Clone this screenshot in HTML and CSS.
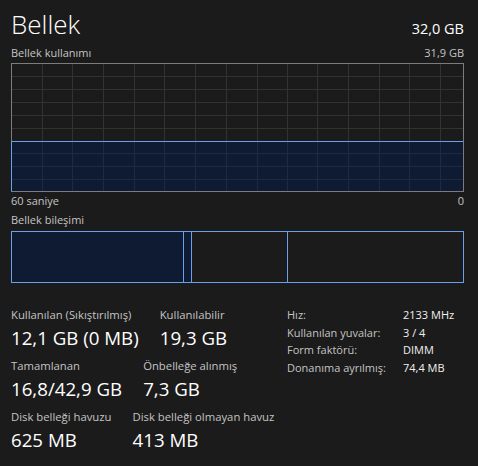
FILE: index.html
```html
<!DOCTYPE html>
<html lang="tr">
<head>
<meta charset="utf-8">
<title>Bellek</title>
<link rel="stylesheet" href="styles.css">
</head>
<body>
<main class="page">
  <header class="header">
    <h1 class="title">Bellek</h1>
    <span class="total">32,0 GB</span>
  </header>

  <div class="graph-head">
    <span>Bellek kullanımı</span>
    <span>31,9 GB</span>
  </div>

  <svg class="graph" width="453" height="129" viewBox="0 0 453 129" aria-hidden="true">
    <rect x="1" y="78" width="451" height="50" fill="#0e1b32"/>
    <path class="grid-top" d="M1 13.5H452M1 26.5H452M1 39.5H452M1 52.5H452M1 65.5H452
      M31.5 1V78M61.5 1V78M92.5 1V78M123.5 1V78M153.5 1V78M184.5 1V78M215.5 1V78M246.5 1V78M276.5 1V78M306.5 1V78M337.5 1V78M368.5 1V78M398.5 1V78M429.5 1V78"/>
    <path class="grid-fill" d="M1 90.5H452M1 103.5H452M1 116.5H452
      M31.5 79V128M61.5 79V128M92.5 79V128M123.5 79V128M153.5 79V128M184.5 79V128M215.5 79V128M246.5 79V128M276.5 79V128M306.5 79V128M337.5 79V128M368.5 79V128M398.5 79V128M429.5 79V128"/>
    <rect class="frame" x="0.5" y="0.5" width="452" height="128"/>
    <path class="usage" d="M0.5 128V78.5H452"/>
  </svg>

  <div class="axis">
    <span>60 saniye</span>
    <span>0</span>
  </div>

  <div class="comp-label">Bellek bileşimi</div>
  <div class="comp">
    <div class="seg seg-used" style="width:172px"></div>
    <div class="seg seg-used" style="width:8px"></div>
    <div class="seg" style="width:96px"></div>
    <div class="seg seg-last"></div>
  </div>

  <section class="stats">
    <div class="stats-main">
      <div class="stat-row">
        <div class="stat">
          <div class="stat-label">Kullanılan (Sıkıştırılmış)</div>
          <div class="stat-value">12,1 GB (0 MB)</div>
        </div>
        <div class="stat">
          <div class="stat-label">Kullanılabilir</div>
          <div class="stat-value">19,3 GB</div>
        </div>
      </div>
      <div class="stat-row">
        <div class="stat">
          <div class="stat-label">Tamamlanan</div>
          <div class="stat-value">16,8/42,9 GB</div>
        </div>
        <div class="stat">
          <div class="stat-label">Önbelleğe alınmış</div>
          <div class="stat-value">7,3 GB</div>
        </div>
      </div>
      <div class="stat-row">
        <div class="stat">
          <div class="stat-label">Disk belleği havuzu</div>
          <div class="stat-value">625 MB</div>
        </div>
        <div class="stat">
          <div class="stat-label">Disk belleği olmayan havuz</div>
          <div class="stat-value">413 MB</div>
        </div>
      </div>
    </div>

    <dl class="specs">
      <dt>Hız:</dt><dd>2133 MHz</dd>
      <dt>Kullanılan yuvalar:</dt><dd>3 / 4</dd>
      <dt>Form faktörü:</dt><dd>DIMM</dd>
      <dt>Donanıma ayrılmış:</dt><dd>74,4 MB</dd>
    </dl>
  </section>
</main>
</body>
</html>
```

FILE: styles.css
```css
html, body {
  margin: 0;
  background: #1b1b1b;
}

body {
  font-family: "Open Sans", "Noto Sans", sans-serif;
  color: #c4c4c4;
  font-size: 11px;
}

.page {
  padding: 8px 14px 0 11px;
}

.header {
  display: flex;
  justify-content: space-between;
  align-items: baseline;
  height: 32px;
  line-height: 32px;
}

.title {
  margin: 0;
  font-size: 26px;
  font-weight: 300;
  color: #ffffff;
  line-height: 32px;
}

.total {
  font-size: 14.5px;
  color: #ffffff;
}

.graph-head,
.axis {
  display: flex;
  justify-content: space-between;
  line-height: 15px;
}

.graph-head {
  margin-top: 5px;
}

.graph {
  display: block;
  margin-top: 3px;
}

.grid-top {
  stroke: #323232;
  stroke-width: 1;
  fill: none;
}

.grid-fill {
  stroke: #1d2a41;
  stroke-width: 1;
  fill: none;
}

.frame {
  fill: none;
  stroke: #7c7c7c;
  stroke-width: 1;
}

.usage {
  fill: none;
  stroke: #68a0ea;
  stroke-width: 1;
}

.axis {
  margin-top: 1px;
}

.comp-label {
  margin-top: 4px;
  line-height: 15px;
}

.comp {
  display: flex;
  margin-top: 4px;
  height: 52px;
  box-sizing: border-box;
  border: 1px solid #68a0ea;
}

.seg {
  box-sizing: border-box;
  border-right: 1px solid #68a0ea;
  flex: none;
}

.seg-used {
  background: #0e1b32;
}

.seg-last {
  flex: 1;
  border-right: 0;
}

.stats {
  display: flex;
  justify-content: space-between;
  align-items: flex-start;
  margin-top: 23px;
}

.stats-main {
  padding-top: 1px;
  display: flex;
  flex-direction: column;
  gap: 9px;
}

.stat-row {
  display: flex;
  gap: 21px;
}

.stat-label {
  font-size: 11.3px;
  line-height: 16px;
  color: #c4c4c4;
}

.stat-value {
  margin-top: 3px;
  font-size: 18.7px;
  line-height: 23px;
  color: #ffffff;
  white-space: nowrap;
}

.specs {
  margin: 0;
  width: 177px;
  display: grid;
  grid-template-columns: 116px 1fr;
  align-content: start;
  line-height: 17.7px;
}

.specs dt {
  color: #c4c4c4;
}

.specs dd {
  margin: 0;
  color: #f0f0f0;
}
```
